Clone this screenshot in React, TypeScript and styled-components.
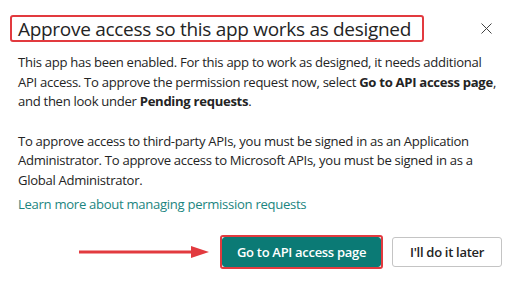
import React from "react";
import styled, { createGlobalStyle } from "styled-components";

const GlobalStyle = createGlobalStyle`
  html, body {
    margin: 0;
    padding: 0;
    background: #ffffff;
  }
  body {
    font-family: "Open Sans", "Noto Sans", sans-serif;
    color: #242424;
  }
`;

const Dialog = styled.div`
  width: 520px;
  height: 283px;
  box-sizing: border-box;
  padding-top: 15px;
  display: flex;
  flex-flow: column nowrap;
  background: #fff;
`;

const Header = styled.div`
  display: flex;
  align-items: center;
  justify-content: space-between;
  padding: 0 28px 0 10px;
`;

const TitleBox = styled.h2`
  margin: 0;
  height: 27px;
  box-sizing: border-box;
  display: flex;
  align-items: center;
  padding: 0 11px 0 6px;
  border: 2px solid #e23a3f;
  border-radius: 3px;
  font-size: 19px;
  font-weight: 400;
  letter-spacing: -0.3px;
  color: #242424;
  white-space: nowrap;
`;

const CloseButton = styled.button`
  border: none;
  background: none;
  padding: 0;
  width: 12px;
  height: 12px;
  display: flex;
  align-items: center;
  justify-content: center;
  color: #424242;
  cursor: pointer;
`;

const Body = styled.div`
  padding: 0 22px 0 18px;
  margin-top: 11px;
  font-size: 13.1px;
  line-height: 19.5px;
  letter-spacing: -0.3px;
  color: #242424;
`;

const Paragraph = styled.p`
  margin: 0 0 20px 0;
`;

const Strong = styled.b`
  font-weight: 700;
`;

const LearnLink = styled.a`
  display: block;
  margin-top: -15px;
  color: #1b8580;
  text-decoration: none;
  cursor: pointer;
`;

const Actions = styled.div`
  display: flex;
  align-items: center;
  justify-content: flex-end;
  padding: 0 18px;
  margin-top: 20px;
`;

const Arrow = styled.svg`
  margin-right: 11px;
  flex: none;
`;

const Highlight = styled.div`
  border: 2px solid #e23a3f;
  border-radius: 3px;
  display: flex;
  margin-right: 9px;
`;

const Button = styled.button<{ $primary?: boolean }>`
  height: 30px;
  box-sizing: border-box;
  padding: ${(p) => (p.$primary ? "0 14px" : "0 17px")};
  border-radius: 3px;
  border: 1px solid ${(p) => (p.$primary ? "#0b7a75" : "#c4c4c4")};
  background: ${(p) => (p.$primary ? "#0b7a75" : "#ffffff")};
  color: ${(p) => (p.$primary ? "#ffffff" : "#242424")};
  font-family: "Open Sans", "Noto Sans", sans-serif;
  font-size: 13px;
  font-weight: 600;
  letter-spacing: -0.3px;
  cursor: pointer;
`;

const App = () => (
  <>
    <GlobalStyle />
    <Dialog>
      <Header>
        <TitleBox>Approve access so this app works as designed</TitleBox>
        <CloseButton aria-label="Close">
          <svg width="11" height="11" viewBox="0 0 11 11">
            <path d="M0.5 0.5 L10.5 10.5 M10.5 0.5 L0.5 10.5" stroke="currentColor" strokeWidth="1" />
          </svg>
        </CloseButton>
      </Header>
      <Body>
        <Paragraph>
          This app has been enabled. For this app to work as designed, it needs additional
          API access. To approve the permission request now, select <Strong>Go to API access page</Strong>,
          and then look under <Strong>Pending requests</Strong>.
        </Paragraph>
        <Paragraph>
          To approve access to third-party APIs, you must be signed in as an Application
          Administrator. To approve access to Microsoft APIs, you must be signed in as a
          Global Administrator.
        </Paragraph>
        <LearnLink>Learn more about managing permission requests</LearnLink>
      </Body>
      <Actions>
        <Arrow width="130" height="14" viewBox="0 0 130 14">
          <path d="M0 7 L116 7" stroke="#e23a3f" strokeWidth="3" />
          <path d="M112 1 L130 7 L112 13 Z" fill="#e23a3f" />
        </Arrow>
        <Highlight>
          <Button $primary>Go to API access page</Button>
        </Highlight>
        <Button>I'll do it later</Button>
      </Actions>
    </Dialog>
  </>
);

export default App;
